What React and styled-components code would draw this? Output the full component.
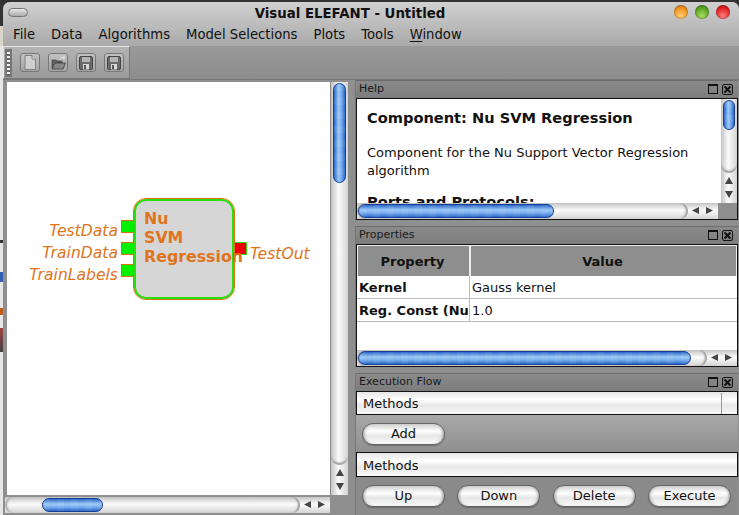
import React from 'react'
import styled, { createGlobalStyle } from 'styled-components'

const GlobalStyle = createGlobalStyle`
  html, body {
    margin: 0;
    padding: 0;
    width: 739px;
    height: 515px;
    overflow: hidden;
    background: #3a3a3a;
  }
  * { box-sizing: border-box; }
`

const Desktop = styled.div`
  width: 739px;
  height: 515px;
  padding: 2px 0 0 3px;
  overflow: hidden;
  font-family: "DejaVu Sans", sans-serif;
  color: #111;
  background: linear-gradient(180deg,
    #333 0, #333 26px, #d8d4c8 26px, #d8d4c8 46px, #e6e6e6 46px, #e6e6e6 240px,
    #333 240px, #333 243px, #e6e6e6 243px, #e6e6e6 272px, #3060b0 272px, #3060b0 282px,
    #e6e6e6 282px, #e6e6e6 308px, #c06020 308px, #c06020 315px, #e6e6e6 315px, #e6e6e6 328px,
    #a04040 328px, #444 352px, #e6e6e6 352px, #e6e6e6 515px);
`

const Window = styled.div`
  height: 513px;
  display: flex;
  flex-direction: column;
  border-radius: 7px 7px 0 0;
  overflow: hidden;
  background: #8f8f8f;
`

const TitleBar = styled.div`
  height: 23px;
  flex: none;
  position: relative;
  display: flex;
  align-items: center;
  justify-content: center;
  padding-right: 42px;
  font-size: 13.33px;
  font-weight: 700;
  background: linear-gradient(180deg, #d0d0d0, #bcbcbc);
`

const TitlePill = styled.span`
  position: absolute;
  left: 5px;
  top: 6px;
  width: 20px;
  height: 9px;
  border-radius: 5px;
  border: 1px solid #777;
  background: linear-gradient(180deg, #e8e8e8, #aaa);
`

const Lights = styled.div`
  position: absolute;
  right: 9px;
  top: 3px;
  display: flex;
  gap: 7px;
`

const Light = styled.span`
  width: 14px;
  height: 14px;
  border-radius: 50%;
  box-shadow: inset 0 0 0 1px rgba(0, 0, 0, 0.18);
  background: radial-gradient(circle at 50% 78%, ${p => p.$glow} 0, ${p => p.$base} 62%, ${p => p.$dark} 100%);
`

const MenuBar = styled.div`
  height: 21px;
  flex: none;
  display: flex;
  align-items: center;
  gap: 16px;
  padding: 0 0 2px 10px;
  font-size: 13.2px;
  background: linear-gradient(180deg, #bcbcbc, #a9a9a9);
  u { text-decoration-thickness: 1px; text-underline-offset: 2px; }
`

const ToolRow = styled.div`
  height: 34px;
  flex: none;
  display: flex;
  background: linear-gradient(180deg, #999, #8d8d8d);
  border-bottom: 1px solid #777;
`

const ToolBox = styled.div`
  width: 127px;
  display: flex;
  align-items: center;
  gap: 8px;
  padding-left: 1px;
  border-top: 1px solid #e4e4e4;
  border-left: 1px solid #e4e4e4;
  border-right: 1px solid #777;
  border-bottom: 1px solid #777;
  background: linear-gradient(180deg, #b4b4b4, #9a9a9a);
`

const Grip = styled.span`
  width: 7px;
  height: 28px;
  background: repeating-linear-gradient(180deg, #f2f2f2 0 2px, #666 2px 4px) 2px 3px / 3px 24px no-repeat, #777;
`

const ToolButton = styled.button`
  width: 20px;
  height: 19px;
  padding: 0;
  display: flex;
  align-items: center;
  justify-content: center;
  border: 1px solid #777;
  border-radius: 3px;
  background: linear-gradient(180deg, #c2c2c2, #a4a4a4);
`

const Main = styled.div`
  flex: 1;
  min-height: 0;
  display: flex;
  gap: 7px;
  padding-left: 2px;
`

const CanvasPane = styled.div`
  width: 343px;
  flex: none;
  padding-top: 2px;
  display: grid;
  grid-template-columns: 1fr 17px;
  grid-template-rows: 413px 16px;
  column-gap: 1px;
  row-gap: 2px;
  align-content: start;
`

const Canvas = styled.div`
  position: relative;
  background: #fff;
  margin-left: 2px;
`

const Node = styled.div`
  position: absolute;
  left: 127px;
  top: 117px;
  width: 100px;
  height: 100px;
  padding: 8px 0 0 8px;
  border: 2px solid #28e010;
  outline: 1px solid #e07010;
  border-radius: 12px;
  background: #d6d6d6;
  color: #e0741c;
  font-size: 15.8px;
  font-weight: 700;
  line-height: 19px;
  white-space: nowrap;
`

const Port = styled.span`
  position: absolute;
  left: ${p => p.$left}px;
  top: ${p => p.$top}px;
  width: 13px;
  height: 13px;
  border: 1px solid ${p => (p.$out ? '#28e010' : '#e07010')};
  background: ${p => (p.$out ? '#f00000' : '#00f000')};
`

const PortLabel = styled.span`
  position: absolute;
  top: ${p => p.$top}px;
  ${p => (p.$out ? `left: ${p.$x}px;` : `right: ${p.$x}px;`)}
  color: #e0741c;
  font-size: 15.6px;
  font-style: italic;
  line-height: 19px;
  white-space: nowrap;
`

const Track = styled.div`
  display: flex;
  flex-direction: ${p => (p.$vertical ? 'column' : 'row')};
  align-items: stretch;
  background: ${p => (p.$vertical
    ? 'linear-gradient(90deg, #c4c4c4, #fbfbfb 45%, #d4d4d4)'
    : 'linear-gradient(180deg, #c4c4c4, #fbfbfb 45%, #d4d4d4)')};
`

const Trough = styled.div`
  flex: 1;
  min-width: 0;
  min-height: 0;
  display: flex;
  flex-direction: ${p => (p.$vertical ? 'column' : 'row')};
  border-radius: 9px;
  box-shadow: ${p => (p.$vertical
    ? 'inset 0 -3px 2px -1px #999'
    : 'inset -3px 0 2px -1px #999, inset 3px 0 2px -1px #aaa')};
`

const Spacer = styled.div`
  flex: 0 0 ${p => p.$size}px;
`

const Thumb = styled.div`
  flex: 0 0 ${p => p.$size}px;
  border: 1px solid #173f96;
  border-radius: 8px;
  margin: ${p => (p.$vertical ? '0 2px' : '1px 0')};
  background:
    repeating-linear-gradient(${p => (p.$vertical ? '180deg' : '90deg')},
      rgba(255, 255, 255, 0.06) 0 7px, rgba(255, 255, 255, 0) 7px 14px),
    linear-gradient(${p => (p.$vertical ? '90deg' : '180deg')}, #2a66c8, #9cc9f6 42%, #74aaec 68%, #2a66c8);
`

const Arrows = styled.div`
  flex: none;
  width: ${p => (p.$vertical ? 'auto' : '30px')};
  height: ${p => (p.$vertical ? '30px' : 'auto')};
  display: flex;
  flex-direction: ${p => (p.$vertical ? 'column' : 'row')};
  align-items: center;
  justify-content: space-between;
  padding: ${p => (p.$vertical ? '4px 0' : '0 4px')};
  color: #444;
`

const Corner = styled.div`
  background: #8f8f8f;
`

const Docks = styled.div`
  flex: 1;
  min-width: 0;
  display: flex;
  flex-direction: column;
  gap: 6px;
`

const Dock = styled.section`
  display: flex;
  flex-direction: column;
  flex: none;
  padding-right: 1px;
  border-left: 1px solid #777;
`

const DockTitle = styled.div`
  height: 18px;
  flex: none;
  display: flex;
  align-items: center;
  justify-content: space-between;
  padding: 0 5px 3px 3px;
  font-size: 11px;
  border-top: 1px solid #6c6c6c;
  background: linear-gradient(180deg, #8a8a8a, #7c7c7c);
  color: #1a1a1a;
`

const DockIcons = styled.div`
  display: flex;
  align-items: center;
  gap: 4px;
  margin-top: 2px;
`

const MinIcon = styled.span`
  width: 10px;
  height: 10px;
  border: 1px solid #111;
  border-top-width: 2px;
`

const CloseIcon = styled.span`
  width: 11px;
  height: 11px;
  border: 1px solid #111;
  border-radius: 2px;
  display: flex;
  align-items: center;
  justify-content: center;
`

const Framed = styled.div`
  border: 1px solid #111;
  background: #fff;
`

const HelpGrid = styled(Framed)`
  height: 122px;
  display: grid;
  grid-template-columns: 1fr 19px;
  grid-template-rows: 1fr 16px;
`

const HelpBody = styled.div`
  overflow: hidden;
  padding: 10px 10px 0;
  font-size: 13px;
  line-height: 18px;
  h4 { margin: 0 0 17px; font-size: 14.6px; line-height: 18px; }
  p { margin: 0 0 13px; }
`

const PropsFrame = styled(Framed)`
  height: 123px;
  display: flex;
  flex-direction: column;
`

const Table = styled.div`
  flex: 1;
  min-height: 0;
  display: grid;
  grid-template-columns: 113px 1fr;
  grid-auto-rows: min-content;
`

const HeadCell = styled.div`
  height: 31px;
  padding-right: 2px;
  display: flex;
  align-items: center;
  justify-content: center;
  font-size: 13px;
  font-weight: 700;
  background: #8e8e8e;
  border-top: 1px solid #eee;
  border-right: 1px solid #eee;
  border-left: 1px solid #eee;
`

const Cell = styled.div`
  height: 23px;
  padding-left: 2px;
  display: flex;
  align-items: center;
  overflow: hidden;
  white-space: nowrap;
  font-size: 13px;
  font-weight: ${p => (p.$bold ? 700 : 400)};
  border-bottom: 1px solid #bbb;
  border-right: ${p => (p.$bold ? '1px solid #bbb' : 0)};
`

const PropsBar = styled.div`
  height: 16px;
  flex: none;
  display: flex;
  > * { flex: 1; min-width: 0; }
`

const FlowBody = styled.div`
  display: flex;
  flex-direction: column;
  background: linear-gradient(180deg, #a8a8a8 20%, #8a8a8a 55%);
`

const ListHead = styled(Framed)`
  height: ${p => p.$height}px;
  display: flex;
  align-items: center;
  justify-content: space-between;
  padding: 1px 0 0 6px;
  font-size: 13px;
  background: linear-gradient(180deg, #e6e6e6, #fff 35%, #e8e8e8 60%, #f8f8f8);
`

const ListEnd = styled.span`
  width: 16px;
  height: 100%;
  border-left: 1px solid #999;
`

const ButtonRow = styled.div`
  display: flex;
  justify-content: space-between;
  padding: 8px 7px ${p => p.$bottom}px 6px;
`

const Pill = styled.button`
  width: 83px;
  height: 22px;
  padding: 0 0 2px;
  border: 1px solid #666;
  border-radius: 11px;
  font: 13px "DejaVu Sans", sans-serif;
  color: #111;
  background: linear-gradient(180deg, #d0d0d0, #fff 35%, #e6e6e6 60%, #fafafa);
  box-shadow: 0 1px 1px rgba(0, 0, 0, 0.25), inset 3px 0 3px -2px #999, inset -3px 0 3px -2px #999;
`

const HelpVBar = styled.div`
  margin-left: 3px;
  display: flex;
  > * { flex: 1; min-width: 0; }
`

const ArrowGlyph = ({ dir }) => {
  const points = {
    up: '4,0 8,7 0,7',
    down: '0,0 8,0 4,7',
    left: '0,3.500 7,0 7,7',
    right: '0,0 7,3.500 0,7',
  }
  return (
    <svg width="8" height="8" viewBox="0 0 8 8">
      <polygon points={points[dir]} fill="currentColor" />
    </svg>
  )
}

const ScrollBar = ({ vertical, before, size }) => (
  <Track $vertical={vertical}>
    <Trough $vertical={vertical}>
      <Spacer $size={before} />
      <Thumb $vertical={vertical} $size={size} />
    </Trough>
    <Arrows $vertical={vertical}>
      <ArrowGlyph dir={vertical ? 'up' : 'left'} />
      <ArrowGlyph dir={vertical ? 'down' : 'right'} />
    </Arrows>
  </Track>
)

const NewIcon = () => (
  <svg width="12" height="15" viewBox="0 0 12 15">
    <path d="M1 .5h7l3.500 3.500v10.500h-10.500z" fill="#cfcfcf" stroke="#808080" />
    <path d="M8 .5v3.500h3.500" fill="#e8e8e8" stroke="#808080" />
  </svg>
)

const OpenIcon = () => (
  <svg width="15" height="14" viewBox="0 0 15 14">
    <path d="M1 4h4l1 1h5v2H4L1 12z" fill="#666" stroke="#333" strokeWidth=".6" />
    <path d="M4 7h10.500L12 13H1z" fill="#888" stroke="#333" strokeWidth=".7" />
    <path d="M9 4c.5-2 2-3 4-2.500M13 .5l.5 1.500-1.500.5" fill="none" stroke="#eee" />
  </svg>
)

const SaveIcon = () => (
  <svg width="14" height="14" viewBox="0 0 14 14">
    <rect x=".5" y=".5" width="13" height="13" rx="1.500" fill="#6a6a6a" stroke="#444" />
    <rect x="3" y="1" width="8" height="5" fill="#b4b4b4" />
    <rect x="4" y="8" width="6" height="5.500" fill="#d8d8d8" />
    <rect x="5" y="9" width="2" height="4" fill="#555" />
  </svg>
)

const DockHeader = ({ title }) => (
  <DockTitle>
    {title}
    <DockIcons>
      <MinIcon />
      <CloseIcon>
        <svg width="9" height="9" viewBox="0 0 9 9">
          <path d="M1.500 1.500l6 6M7.500 1.500l-6 6" stroke="#111" strokeWidth="2" />
        </svg>
      </CloseIcon>
    </DockIcons>
  </DockTitle>
)

const menus = ['File', 'Data', 'Algorithms', 'Model Selections', 'Plots', 'Tools']

export default function App() {
  return (
    <Desktop>
      <GlobalStyle />
      <Window>
        <TitleBar>
          <TitlePill />
          Visual ELEFANT - Untitled
          <Lights>
            <Light $glow="#ffd070" $base="#f09020" $dark="#b05a10" />
            <Light $glow="#a8e060" $base="#5aa020" $dark="#3a7010" />
            <Light $glow="#ff8080" $base="#e02020" $dark="#a01010" />
          </Lights>
        </TitleBar>
        <MenuBar>
          {menus.map(m => <span key={m}>{m}</span>)}
          <span><u>W</u>indow</span>
        </MenuBar>
        <ToolRow>
          <ToolBox>
            <Grip />
            <ToolButton><NewIcon /></ToolButton>
            <ToolButton><OpenIcon /></ToolButton>
            <ToolButton><SaveIcon /></ToolButton>
            <ToolButton><SaveIcon /></ToolButton>
          </ToolBox>
        </ToolRow>
        <Main>
          <CanvasPane>
            <Canvas>
              <Port $left={114} $top={138} />
              <Port $left={114} $top={160} />
              <Port $left={114} $top={182} />
              <Port $left={227} $top={160} $out />
              <PortLabel $top={140} $x={212}>TestData</PortLabel>
              <PortLabel $top={162} $x={212}>TrainData</PortLabel>
              <PortLabel $top={184} $x={212}>TrainLabels</PortLabel>
              <PortLabel $top={163} $x={243} $out>TestOut</PortLabel>
              <Node>Nu<br />SVM<br />Regression</Node>
            </Canvas>
            <ScrollBar vertical before={1} size={100} />
            <ScrollBar before={37} size={61} />
            <Corner />
          </CanvasPane>
          <Docks>
            <Dock>
              <DockHeader title="Help" />
              <HelpGrid>
                <HelpBody>
                  <h4>Component: Nu SVM Regression</h4>
                  <p>Component for the Nu Support Vector Regression algorithm</p>
                  <h4>Ports and Protocols:</h4>
                </HelpBody>
                <HelpVBar><ScrollBar vertical before={1} size={30} /></HelpVBar>
                <ScrollBar before={1} size={196} />
                <Corner />
              </HelpGrid>
            </Dock>
            <Dock>
              <DockHeader title="Properties" />
              <PropsFrame>
                <Table>
                  <HeadCell>Property</HeadCell>
                  <HeadCell>Value</HeadCell>
                  <Cell $bold>Kernel</Cell>
                  <Cell>Gauss kernel</Cell>
                  <Cell $bold>Reg. Const (Nu</Cell>
                  <Cell>1.0</Cell>
                </Table>
                <PropsBar><ScrollBar before={1} size={333} /></PropsBar>
              </PropsFrame>
            </Dock>
            <Dock>
              <DockHeader title="Execution Flow" />
              <FlowBody>
                <ListHead $height={24}>Methods<ListEnd /></ListHead>
                <ButtonRow $bottom={7}>
                  <Pill>Add</Pill>
                </ButtonRow>
                <ListHead $height={25}>Methods</ListHead>
                <ButtonRow $bottom={8}>
                  <Pill>Up</Pill>
                  <Pill>Down</Pill>
                  <Pill>Delete</Pill>
                  <Pill>Execute</Pill>
                </ButtonRow>
              </FlowBody>
            </Dock>
          </Docks>
        </Main>
      </Window>
    </Desktop>
  )
}
